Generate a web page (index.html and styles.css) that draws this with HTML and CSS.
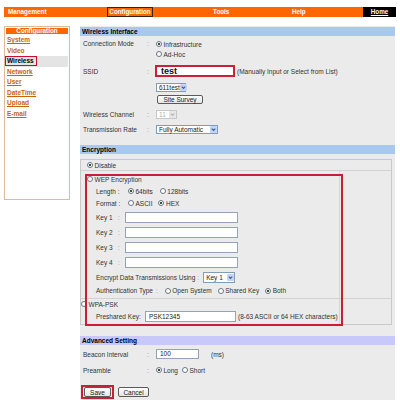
FILE: index.html
```html
<!DOCTYPE html>
<html>
<head>
<meta charset="utf-8">
<link rel="stylesheet" href="styles.css">
</head>
<body>
<div class="topbar">
  <div class="tb-mgmt">Management</div>
  <div class="tb-conf">Configuration</div>
  <div class="tb-tools">Tools</div>
  <div class="tb-help">Help</div>
  <div class="tb-home">Home</div>
</div>
<div class="page">
  <nav class="side">
    <div class="side-head">Configuration</div>
    <a class="link">System</a>
    <a class="link plain">Video</a>
    <a class="link cur"><span>Wireless</span></a>
    <a class="link">Network</a>
    <a class="link">User</a>
    <a class="link">DateTime</a>
    <a class="link">Upload</a>
    <a class="link">E-mail</a>
  </nav>
  <main class="main">
    <div class="sec-head">Wireless Interface</div>
    <div class="row cm">
      <span class="lbl">Connection Mode</span><span class="colon">:</span>
      <div class="opts">
        <div class="line"><span class="radio on"></span>Infrastructure</div>
        <div class="line"><span class="radio"></span>Ad-Hoc</div>
      </div>
    </div>
    <div class="row ssid">
      <span class="lbl">SSID</span><span class="colon">:</span>
      <span class="ssid-field">test</span><span class="hint">(Manually Input or Select from List)</span>
    </div>
    <div class="row r611">
      <span class="lbl"></span><span class="colon"></span>
      <span class="select w30">611test<span class="arrow"><svg viewBox="0 0 8 8"><path d="M2 3 L4 5 L6 3" /></svg></span></span>
    </div>
    <div class="row survey">
      <span class="lbl"></span><span class="colon"></span>
      <span class="btn w46">Site Survey</span>
    </div>
    <div class="row chan">
      <span class="lbl">Wireless Channel</span><span class="colon">:</span>
      <span class="select w21 dis">11<span class="arrow"><svg viewBox="0 0 8 8"><path d="M2 3 L4 5 L6 3" /></svg></span></span>
    </div>
    <div class="row rate">
      <span class="lbl">Transmission Rate</span><span class="colon">:</span>
      <span class="select w62">Fully Automatic<span class="arrow"><svg viewBox="0 0 8 8"><path d="M2 3 L4 5 L6 3" /></svg></span></span>
    </div>

    <div class="sec-head enc-head">Encryption</div>
    <div class="enc">
      <div class="enc-disable"><span class="radio on"></span>Disable</div>
      <div class="enc-row">
        <div class="cell wep">
          <div class="line"><span class="radio"></span>WEP Encryption</div>
          <div class="sub">
            <div class="sline mt2"><span class="slbl">Length :</span><span class="opt m7"><span class="radio on"></span>64bits</span><span class="opt"><span class="radio"></span>128bits</span></div>
            <div class="sline mt2"><span class="slbl">Format :</span><span class="opt m6"><span class="radio"></span>ASCII</span><span class="opt"><span class="radio on"></span>HEX</span></div>
            <div class="krow mt2"><span class="klbl">Key 1</span><span class="kcol">:</span><span class="field w113"></span></div>
            <div class="krow"><span class="klbl">Key 2</span><span class="kcol">:</span><span class="field w113"></span></div>
            <div class="krow"><span class="klbl">Key 3</span><span class="kcol">:</span><span class="field w113"></span></div>
            <div class="krow"><span class="klbl">Key 4</span><span class="kcol">:</span><span class="field w113"></span></div>
            <div class="erow"><span>Encrypt Data Transmissions Using</span><span class="c2">:</span><span class="select w32 h11">Key 1<span class="arrow"><svg viewBox="0 0 8 8"><path d="M2 3 L4 5 L6 3" /></svg></span></span></div>
            <div class="arow"><span>Authentication Type</span><span class="c3">:</span><span class="opt m6"><span class="radio"></span>Open System</span><span class="opt m6"><span class="radio"></span>Shared Key</span><span class="opt"><span class="radio on"></span>Both</span></div>
          </div>
        </div>
      </div>
      <div class="enc-row">
        <div class="cell wpa">
          <div class="line"><span class="radio"></span>WPA-PSK</div>
          <div class="sub">
            <div class="prow"><span class="plbl">Preshared Key:</span><span class="field w91">PSK12345</span><span class="hint">(8-63 ASCII or 64 HEX characters)</span></div>
          </div>
        </div>
      </div>
      <div class="mark"></div>
    </div>

    <div class="sec-head lav">Advanced Setting</div>
    <div class="row beacon">
      <span class="lbl">Beacon Interval</span><span class="colon">:</span>
      <span class="field w43 h10">100</span><span class="ms">(ms)</span>
    </div>
    <div class="row pre">
      <span class="lbl">Preamble</span><span class="colon">:</span>
      <span class="opt m4"><span class="radio on"></span>Long</span><span class="opt"><span class="radio"></span>Short</span>
    </div>
    <div class="btns">
      <span class="savemark"><span class="btn w27">Save</span></span>
      <span class="btn w31">Cancel</span>
    </div>
  </main>
</div>
</body>
</html>
```

FILE: styles.css
```css
* { box-sizing: border-box; }
html, body { margin: 0; padding: 0; }
body {
  width: 400px;
  height: 400px;
  overflow: hidden;
  background: #fff;
  font-family: "Liberation Sans", Arial, sans-serif;
  font-size: 6.5px;
  color: #333;
}

/* top navigation */
.topbar {
  display: flex;
  margin: 7px 4px 0;
  height: 10px;
  background: #ff6600;
  color: #fff;
  font-weight: bold;
  font-size: 6.3px;
  line-height: 10px;
}
.tb-mgmt { width: 103px; padding-left: 4px; }
.tb-conf { width: 46px; border: 1px solid #3b2414; line-height: 8px; text-align: center; }
.tb-tools { width: 139px; padding-left: 60px; }
.tb-help { width: 71px; }
.tb-home { width: 33px; background: #000; text-align: center; text-decoration: underline; }

.page {
  display: flex;
  align-items: flex-start;
  margin: 9px 0 0 4px;
}

/* sidebar */
.side {
  width: 66px;
  height: 174px;
  border: 1px solid #d8bc9c;
  padding: 1px;
  display: flex;
  flex-direction: column;
}
.side-head {
  height: 6px;
  line-height: 6px;
  background: #ff6600;
  color: #fff;
  font-weight: bold;
  font-size: 6.3px;
  text-align: center;
  margin-bottom: 1px;
}
.link {
  display: block;
  height: 10.5px;
  line-height: 10.5px;
  padding-left: 1px;
  color: #c8640a;
  font-weight: bold;
  font-size: 6.5px;
  text-decoration: underline;
}
.link.plain { text-decoration: none; }
.link.cur { background: #e4e4e4; color: #000; text-decoration: none; }
.link.cur span {
  display: inline-block;
  border: 1.5px solid #c8102e;
  line-height: 7.5px;
  padding: 0 2px 0 1px;
  margin-left: -2px;
}

/* main panel */
.main {
  width: 315px;
  height: 374px;
  margin-left: 10px;
  background: #ebebeb;
  padding-top: 1px;
}
.sec-head {
  height: 9px;
  line-height: 9px;
  background: #a8c8f0;
  color: #000;
  font-weight: bold;
  padding-left: 2px;
}
.sec-head.lav { background: #c8c8fa; margin-top: 11px; }
.enc-head { margin-top: 11px; }

.row { display: flex; align-items: center; padding-left: 3px; }
.lbl { width: 64px; }
.colon { width: 9px; color: #999; }

.cm { align-items: flex-start; margin-top: 3px; }
.cm .lbl, .cm .colon { line-height: 10px; }
.line { display: flex; align-items: center; height: 10px; }
.ssid { margin-top: 6px; height: 12px; }
.r611 { margin-top: 6px; height: 9px; }
.survey { margin-top: 3px; height: 9px; }
.chan { margin-top: 5px; height: 10px; }
.rate { margin-top: 5px; height: 10px; }

/* radios */
.radio {
  display: inline-block;
  width: 6px;
  height: 6px;
  border: 1px solid #6b7785;
  border-radius: 50%;
  background: #fff;
  margin-right: 1.5px;
  flex: none;
}
.radio.on { background: radial-gradient(circle, #2f5d2f 0 1.2px, #fff 1.6px); }
.opt { display: inline-flex; align-items: center; }
.m4 { margin-right: 4px; }
.m6 { margin-right: 6px; }
.m7 { margin-right: 7px; }

/* fields */
.ssid-field {
  width: 80px;
  height: 12px;
  margin-left: -1px;
  border: 2px solid #cc2036;
  background: #fff;
  font-weight: bold;
  font-size: 9px;
  line-height: 8px;
  color: #111;
  padding-left: 4px;
}
.hint { margin-left: 2px; }
.field {
  display: inline-block;
  height: 11px;
  background: #fff;
  border: 1px solid #93a4b8;
  line-height: 9px;
  padding-left: 3px;
  color: #222;
}
.h10 { height: 10px; line-height: 8px; }
.w113 { width: 113px; }
.w91 { width: 91px; }
.w43 { width: 43px; }

.select {
  display: inline-flex;
  align-items: center;
  justify-content: space-between;
  height: 9px;
  background: #fff;
  border: 1px solid #7f9db9;
  padding-left: 2px;
  color: #222;
}
.select.h11 { height: 11px; }
.arrow {
  width: 7px;
  height: 7px;
  background: #c3d4fb;
  border-radius: 1px;
  display: flex;
}
.arrow svg { width: 7px; height: 7px; }
.arrow path { stroke: #4a5f8a; stroke-width: 1.4; fill: none; }
.select.dis { border-color: #c7c7c7; color: #b0b0b0; }
.select.dis .arrow { background: #e6e6e6; }
.select.dis .arrow path { stroke: #b9b9b9; }
.w30 { width: 30px; }
.w21 { width: 21px; }
.w62 { width: 62px; }
.w32 { width: 32px; }

.btn {
  display: inline-flex;
  align-items: center;
  justify-content: center;
  height: 9px;
  border: 1px solid #5a5a5a;
  border-radius: 2px;
  background: linear-gradient(#ffffff, #e4e4e4);
  color: #222;
}
.w46 { width: 46px; margin-left: 1px; }
.w27 { width: 27px; height: 10px; }
.w31 { width: 31px; height: 10px; margin-left: 4px; }

/* encryption block */
.enc {
  position: relative;
  margin: 5px 3px 0 0;
  border: 1px solid #c9c9c9;
}
.enc-disable {
  height: 10px;
  display: flex;
  align-items: center;
  padding-left: 6px;
}
.enc-row {
  display: flex;
  border-top: 1px solid #d2d2d2;
}
.cell {
  width: 259px;
  border-right: 1px solid #d6d6d6;
}
.cell.wep { padding: 3px 0 2px 6px; }
.cell.wpa { padding: 0 0 2px 0; }
.sub { padding-left: 9px; }
.cell.wpa .sub { padding-left: 15px; }
.sline { display: flex; align-items: center; height: 10px; }
.mt2 { margin-top: 2px; }
.slbl { width: 32px; }
.krow { display: flex; align-items: center; height: 15px; }
.klbl { width: 22px; }
.kcol { width: 7px; color: #999; }
.erow { display: flex; align-items: center; height: 14px; }
.c2 { margin: 0 4px 0 2px; color: #999; }
.arow { display: flex; align-items: center; height: 11px; margin-top: 1px; }
.c3 { margin: 0 7px 0 3px; color: #999; }
.prow { display: flex; align-items: center; height: 12px; margin-top: 1px; }
.plbl { width: 49px; }
.mark {
  position: absolute;
  left: 4px;
  top: 14px;
  width: 258px;
  height: 152px;
  border: 2px solid #c81e36;
  pointer-events: none;
}

/* advanced */
.beacon { margin-top: 4px; height: 10px; }
.ms { margin-left: 12px; }
.pre { margin-top: 6px; height: 10px; }
.btns {
  display: flex;
  align-items: center;
  margin-top: 10px;
  padding-left: 1px;
}
.savemark {
  display: inline-flex;
  border: 2px solid #c81e36;
  padding: 0 1px;
}
```
